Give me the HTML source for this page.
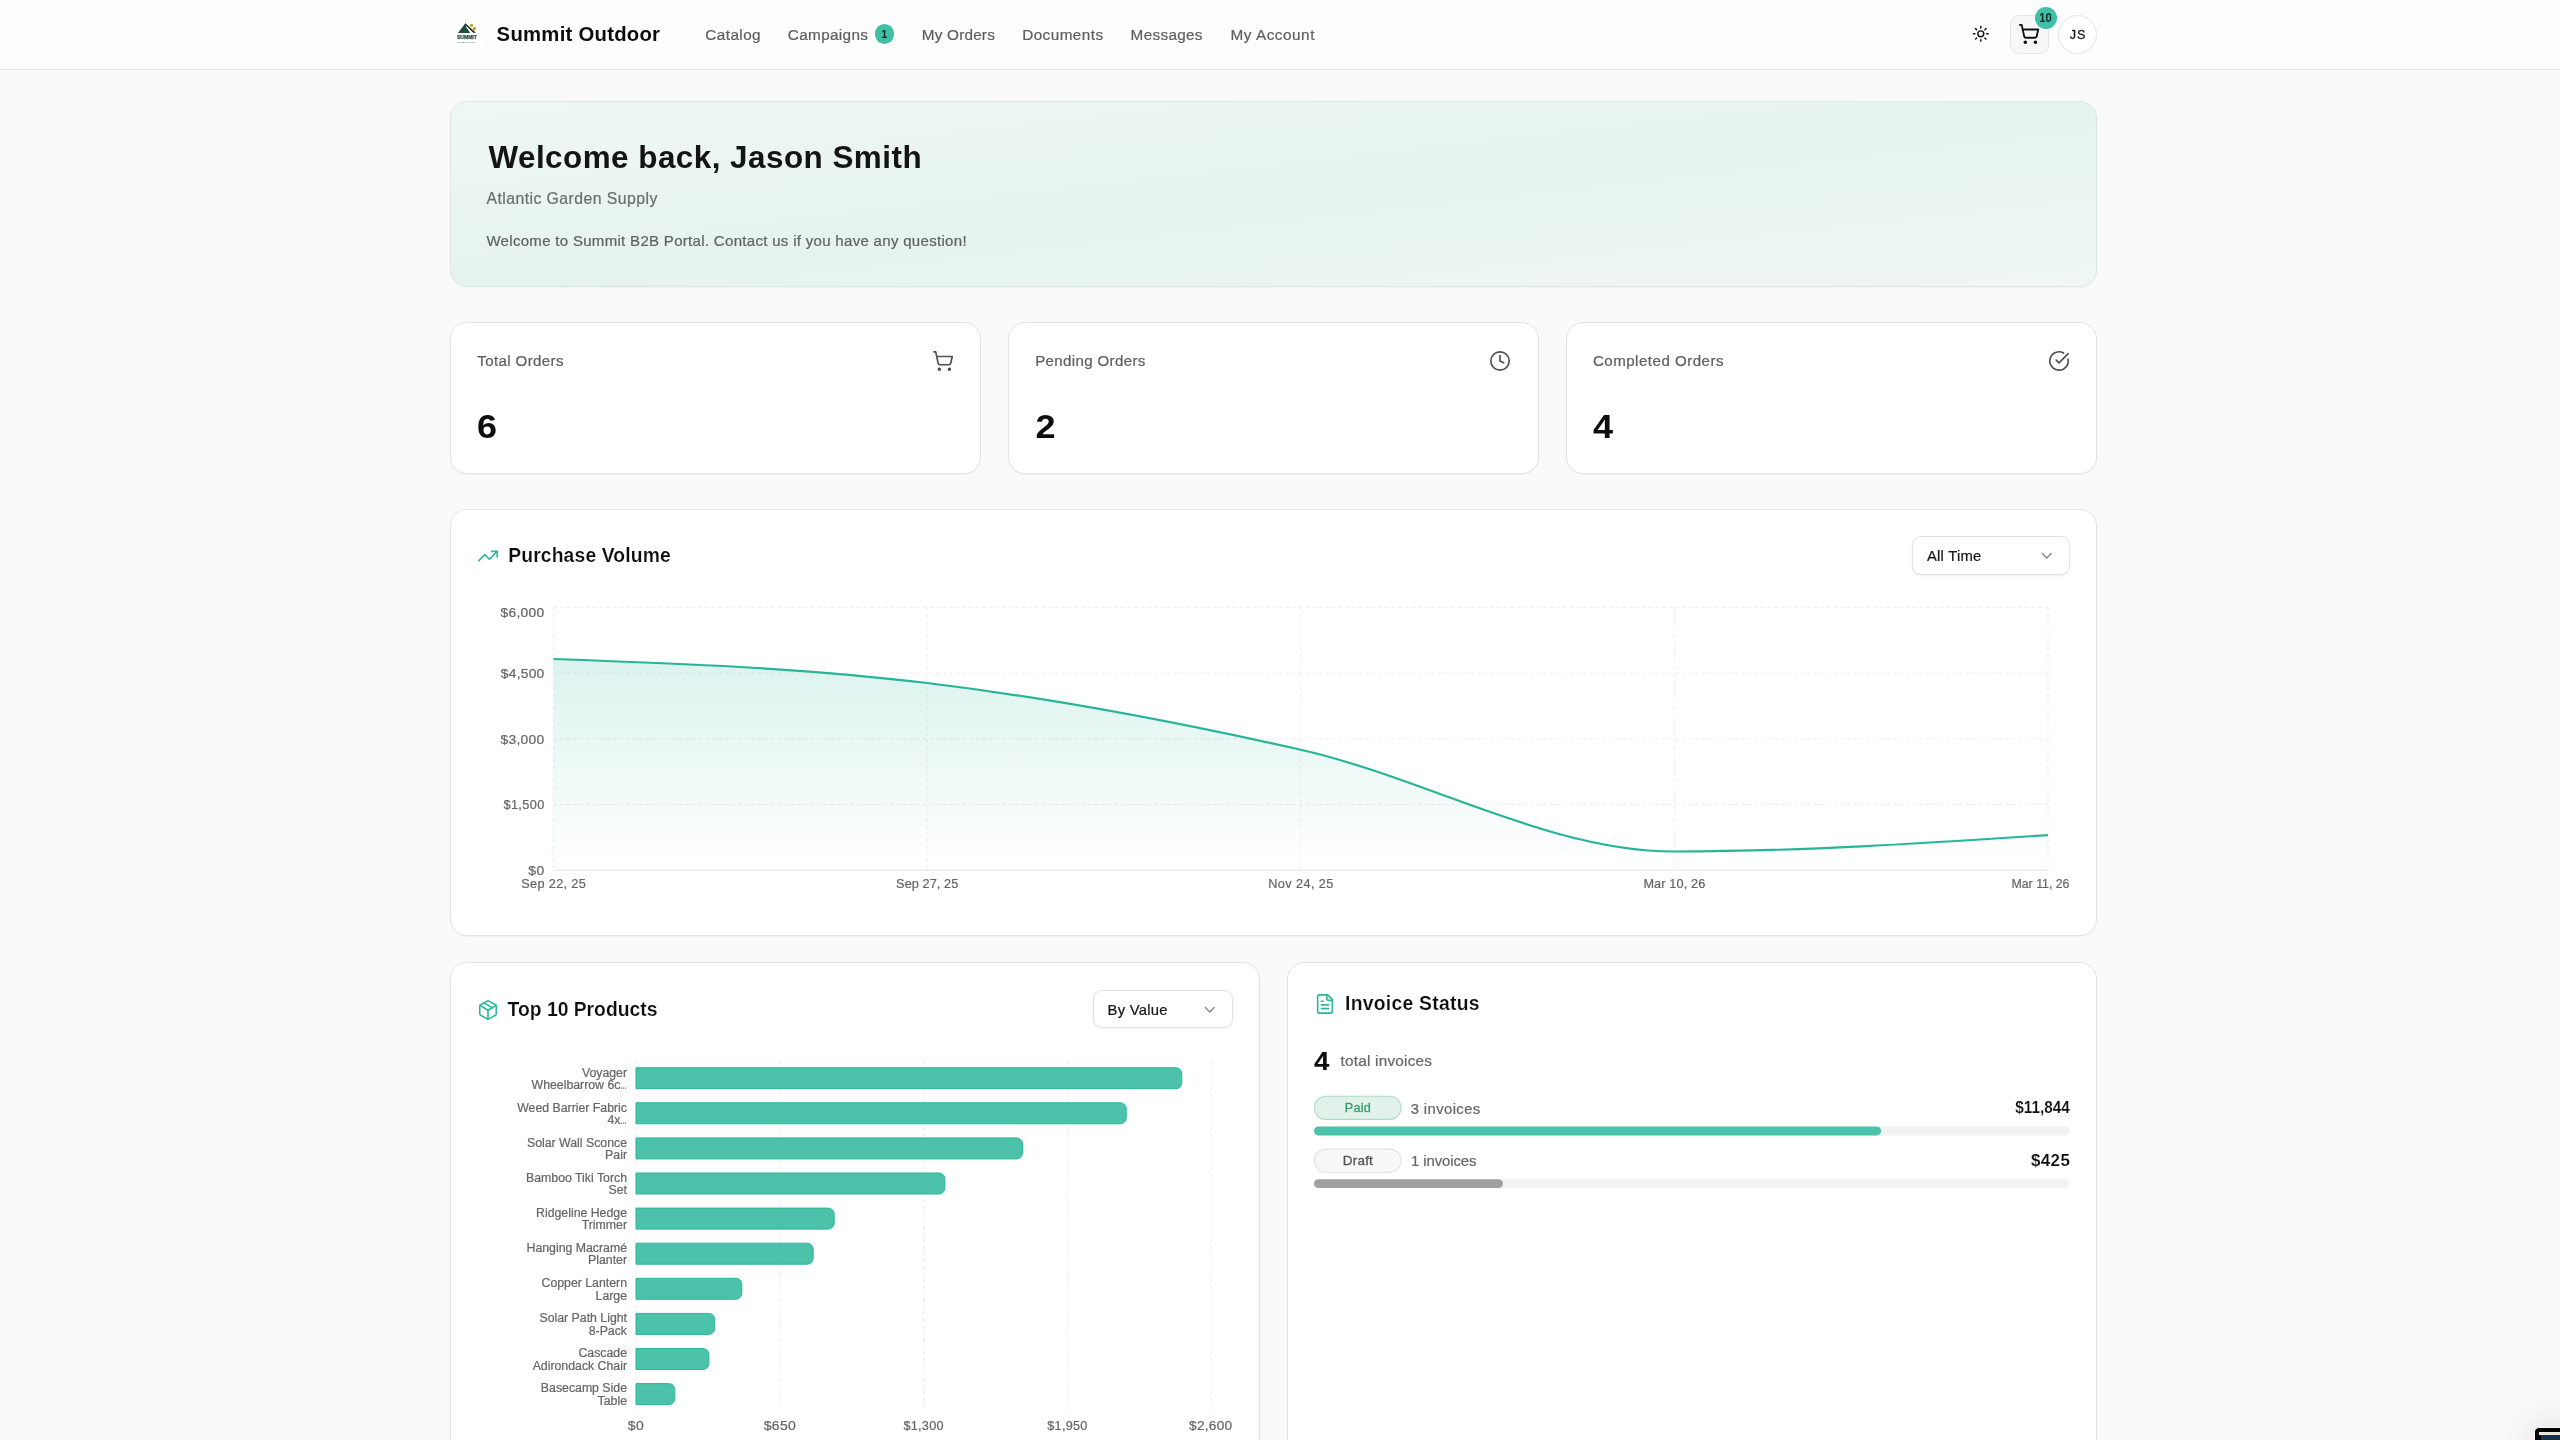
<!DOCTYPE html>
<html lang="en"><head><meta charset="utf-8"><title>Summit Outdoor – B2B Portal</title>
<style>
html,body{margin:0;padding:0;}
body{width:2560px;height:1440px;overflow:hidden;background:#fafafa;position:relative;font-family:"Liberation Sans", sans-serif;}
.txt text{font-family:"Liberation Sans", sans-serif;white-space:pre;}
.ic{position:absolute;overflow:visible;}
.abs{position:absolute;box-sizing:border-box;}
.card{position:absolute;box-sizing:border-box;background:#fff;border:1px solid #e4e4e4;border-radius:17px;box-shadow:0 1px 2px rgba(0,0,0,.04);}
.sel{position:absolute;box-sizing:border-box;background:#fff;border:1px solid #e2e2e2;border-radius:9px;box-shadow:0 1px 2px rgba(0,0,0,.07);}
svg.full{position:absolute;left:0;top:0;width:2560px;height:1440px;}
svg.txt{will-change:transform;}
</style></head><body>
<header class="abs" style="left:0;top:0;width:2560px;height:70px;background:#fdfdfd;border-bottom:1px solid #e4e4e4;"></header>
<div class="abs" style="left:450px;top:17px;width:34px;height:34px;border-radius:8px;background:#fff;"></div>
<div class="abs" style="left:874.6px;top:24.4px;width:19.6px;height:19.6px;border-radius:50%;background:#3fbfa5;"></div>
<div class="abs" style="left:2010px;top:15px;width:38.5px;height:38.5px;border-radius:9px;background:#f7f7f7;border:1px solid #e6e6e6;"></div>
<div class="abs" style="left:2034.6px;top:6.6px;width:22.2px;height:22.2px;border-radius:50%;background:#3fbfa5;"></div>
<div class="abs" style="left:2058.4px;top:14.7px;width:39px;height:39px;border-radius:50%;background:#fff;border:1px solid #e3e3e3;"></div>

<section class="abs" style="left:450px;top:101px;width:1647px;height:186px;border-radius:17px;border:1px solid #dfe7e5;background:linear-gradient(to bottom right,rgba(43,183,154,.05),rgba(43,183,154,.10),rgba(43,183,154,.05)) #fafafa;box-shadow:0 1px 2px rgba(0,0,0,.04);"></section>

<div class="card" style="left:450px;top:322px;width:531.2px;height:152px;"></div>
<div class="card" style="left:1007.9px;top:322px;width:531.2px;height:152px;"></div>
<div class="card" style="left:1565.8px;top:322px;width:531.2px;height:152px;"></div>

<div class="card" style="left:450px;top:509px;width:1647px;height:426.5px;"></div>
<div class="sel" style="left:1912.4px;top:536.3px;width:157.2px;height:38.8px;"></div>

<div class="card" style="left:450px;top:962px;width:810px;height:520px;"></div>
<div class="sel" style="left:1093.3px;top:990.2px;width:139.6px;height:38.3px;"></div>
<div class="card" style="left:1287.2px;top:962px;width:809.8px;height:520px;"></div>

<svg class="full" viewBox="0 0 2560 1440">
<defs><linearGradient id="ag" x1="0" y1="0" x2="0" y2="1"><stop offset="0.03" stop-color="#2bb79a" stop-opacity="0.165"/><stop offset="0.97" stop-color="#2bb79a" stop-opacity="0"/></linearGradient></defs>
<g stroke="#e3e3e3" stroke-width="1" stroke-dasharray="3.3 3.3" fill="none" opacity="0.7"><line x1="553.5" y1="607.50" x2="2048.0" y2="607.50"/><line x1="553.5" y1="673.17" x2="2048.0" y2="673.17"/><line x1="553.5" y1="738.85" x2="2048.0" y2="738.85"/><line x1="553.5" y1="804.53" x2="2048.0" y2="804.53"/><line x1="553.50" y1="607.5" x2="553.50" y2="870.2"/><line x1="927.12" y1="607.5" x2="927.12" y2="870.2"/><line x1="1300.75" y1="607.5" x2="1300.75" y2="870.2"/><line x1="1674.38" y1="607.5" x2="1674.38" y2="870.2"/><line x1="2048.00" y1="607.5" x2="2048.00" y2="870.2"/></g>
<path d="M553.50,659.00C678.04,663.43,802.58,667.87,927.12,683.00C1051.67,698.13,1176.21,721.72,1300.75,749.80C1425.29,777.88,1549.83,851.50,1674.38,851.50C1798.92,851.50,1923.46,843.30,2048.00,835.10L2048.00,870.20L553.50,870.20Z" fill="url(#ag)"/>
<path d="M553.50,659.00C678.04,663.43,802.58,667.87,927.12,683.00C1051.67,698.13,1176.21,721.72,1300.75,749.80C1425.29,777.88,1549.83,851.50,1674.38,851.50C1798.92,851.50,1923.46,843.30,2048.00,835.10" fill="none" stroke="#27b597" stroke-width="2.2"/>
<line x1="553.5" y1="870.2" x2="2048.0" y2="870.2" stroke="#e2e2e2" stroke-width="1"/>
<g stroke="#e3e3e3" stroke-width="1" stroke-dasharray="3.3 3.3" fill="none" opacity="0.7"><line x1="635.8" y1="1061" x2="635.8" y2="1412"/><line x1="779.7" y1="1061" x2="779.7" y2="1412"/><line x1="923.5" y1="1061" x2="923.5" y2="1412"/><line x1="1067.4" y1="1061" x2="1067.4" y2="1412"/><line x1="1211.2" y1="1061" x2="1211.2" y2="1412"/></g>
<g fill="#2bb79a" fill-opacity="0.85" stroke="#2bb79a" stroke-width="1"><path d="M636.0,1067.70H1175.80a6.0,6.0 0 0 1 6.0,6.0V1082.70a6.0,6.0 0 0 1 -6.0,6.0H636.0Z"/><path d="M636.0,1102.80H1120.30a6.0,6.0 0 0 1 6.0,6.0V1117.80a6.0,6.0 0 0 1 -6.0,6.0H636.0Z"/><path d="M636.0,1137.90H1016.50a6.0,6.0 0 0 1 6.0,6.0V1152.90a6.0,6.0 0 0 1 -6.0,6.0H636.0Z"/><path d="M636.0,1173.00H938.90a6.0,6.0 0 0 1 6.0,6.0V1188.00a6.0,6.0 0 0 1 -6.0,6.0H636.0Z"/><path d="M636.0,1208.10H828.20a6.0,6.0 0 0 1 6.0,6.0V1223.10a6.0,6.0 0 0 1 -6.0,6.0H636.0Z"/><path d="M636.0,1243.20H807.20a6.0,6.0 0 0 1 6.0,6.0V1258.20a6.0,6.0 0 0 1 -6.0,6.0H636.0Z"/><path d="M636.0,1278.30H735.80a6.0,6.0 0 0 1 6.0,6.0V1293.30a6.0,6.0 0 0 1 -6.0,6.0H636.0Z"/><path d="M636.0,1313.40H708.70a6.0,6.0 0 0 1 6.0,6.0V1328.40a6.0,6.0 0 0 1 -6.0,6.0H636.0Z"/><path d="M636.0,1348.50H702.90a6.0,6.0 0 0 1 6.0,6.0V1363.50a6.0,6.0 0 0 1 -6.0,6.0H636.0Z"/><path d="M636.0,1383.60H668.80a6.0,6.0 0 0 1 6.0,6.0V1398.60a6.0,6.0 0 0 1 -6.0,6.0H636.0Z"/></g>
<g>
<rect x="1314.4" y="1096.2" width="86.7" height="23.2" rx="11.6" fill="#e0f2e9" stroke="#a9dcc3" stroke-width="1.1"/>
<rect x="1314.4" y="1149.1" width="86.7" height="23.2" rx="11.6" fill="#f8f8f8" stroke="#e2e2e2" stroke-width="1.1"/>
<rect x="1314" y="1126.5" width="755.8" height="8.9" rx="4.45" fill="#f2f2f2"/>
<rect x="1314" y="1126.5" width="567.1" height="8.9" rx="4.45" fill="#4bc2aa"/>
<rect x="1314" y="1179.2" width="755.8" height="8.9" rx="4.45" fill="#f2f2f2"/>
<rect x="1314" y="1179.2" width="189" height="8.9" rx="4.45" fill="#a0a0a0"/>
</g>
<!-- logo -->
<g>
<path d="M465.4 23.2 L457.9 32.9 H470.3 L466.4 27.6 Z" fill="#1f4d3a"/>
<path d="M465.4 23.2 L475.9 32.7 H473.2 L464.9 24.4 Z" fill="#12281f"/>
<circle cx="471.6" cy="25.4" r="1.7" fill="#c9a227"/>
<ellipse cx="474.1" cy="29" rx="2.4" ry="1.3" fill="#c8842e" transform="rotate(-50 474.1 29)"/>
</g>
</svg>
<svg class="ic" style="left:1972.3px;top:25.3px;" width="17.6" height="17.6" viewBox="0 0 24 24" fill="none" stroke="#111" stroke-width="2" stroke-linecap="round" stroke-linejoin="round"><circle cx="12" cy="12" r="4"/><path d="M12 2v2"/><path d="M12 20v2"/><path d="m4.93 4.93 1.41 1.41"/><path d="m17.66 17.66 1.41 1.41"/><path d="M2 12h2"/><path d="M20 12h2"/><path d="m6.34 17.66-1.41 1.41"/><path d="m19.07 4.93-1.41 1.41"/></svg><svg class="ic" style="left:2018.2px;top:22.9px;" width="22" height="22" viewBox="0 0 24 24" fill="none" stroke="#111" stroke-width="2" stroke-linecap="round" stroke-linejoin="round"><circle cx="8" cy="21" r="1"/><circle cx="19" cy="21" r="1"/><path d="M2.05 2.05h2l2.66 12.42a2 2 0 0 0 2 1.58h9.78a2 2 0 0 0 1.95-1.57l1.65-7.43H5.12"/></svg><svg class="ic" style="left:932.0px;top:349.6px;" width="22" height="22" viewBox="0 0 24 24" fill="none" stroke="#4e4e4e" stroke-width="1.8" stroke-linecap="round" stroke-linejoin="round"><circle cx="8" cy="21" r="1"/><circle cx="19" cy="21" r="1"/><path d="M2.05 2.05h2l2.66 12.42a2 2 0 0 0 2 1.58h9.78a2 2 0 0 0 1.95-1.57l1.65-7.43H5.12"/></svg><svg class="ic" style="left:1489.35px;top:349.55px;" width="22" height="22" viewBox="0 0 24 24" fill="none" stroke="#4e4e4e" stroke-width="1.8" stroke-linecap="round" stroke-linejoin="round"><circle cx="12" cy="12" r="10"/><polyline points="12 6 12 12 16 14"/></svg><svg class="ic" style="left:2047.7px;top:350.05px;" width="22" height="22" viewBox="0 0 24 24" fill="none" stroke="#4e4e4e" stroke-width="1.8" stroke-linecap="round" stroke-linejoin="round"><path d="M21.801 10A10 10 0 1 1 17 3.335"/><path d="m9 11 3 3L22 4"/></svg><svg class="ic" style="left:476.8px;top:544.5px;" width="22" height="22" viewBox="0 0 24 24" fill="none" stroke="#2bb79a" stroke-width="1.75" stroke-linecap="round" stroke-linejoin="round"><polyline points="22 7 13.5 15.5 8.5 10.5 2 17"/><polyline points="16 7 22 7 22 13"/></svg><svg class="ic" style="left:476.75px;top:998.75px;" width="22" height="22" viewBox="0 0 24 24" fill="none" stroke="#2bb79a" stroke-width="1.75" stroke-linecap="round" stroke-linejoin="round"><path d="M11 21.73a2 2 0 0 0 2 0l7-4A2 2 0 0 0 21 16V8a2 2 0 0 0-1-1.73l-7-4a2 2 0 0 0-2 0l-7 4A2 2 0 0 0 3 8v8a2 2 0 0 0 1 1.73z"/><path d="M12 22V12"/><path d="m3.3 7 7.703 4.734a2 2 0 0 0 1.994 0L20.7 7"/><path d="m7.5 4.27 9 5.15"/></svg><svg class="ic" style="left:1313.75px;top:992.5px;" width="22" height="22" viewBox="0 0 24 24" fill="none" stroke="#2bb79a" stroke-width="1.75" stroke-linecap="round" stroke-linejoin="round"><path d="M15 2H6a2 2 0 0 0-2 2v16a2 2 0 0 0 2 2h12a2 2 0 0 0 2-2V7Z"/><path d="M14 2v4a2 2 0 0 0 2 2h4"/><path d="M10 9H8"/><path d="M16 13H8"/><path d="M16 17H8"/></svg><svg class="ic" style="left:2038.2px;top:547.1px;" width="17.6" height="17.6" viewBox="0 0 24 24" fill="none" stroke="#8a8a8a" stroke-width="2" stroke-linecap="round" stroke-linejoin="round"><path d="m6 9 6 6 6-6"/></svg><svg class="ic" style="left:1200.8px;top:1000.7px;" width="17.6" height="17.6" viewBox="0 0 24 24" fill="none" stroke="#8a8a8a" stroke-width="2" stroke-linecap="round" stroke-linejoin="round"><path d="m6 9 6 6 6-6"/></svg>
<svg class="full txt" viewBox="0 0 2560 1440"><text x="496.60" y="41" style="font-size:20.3px;fill:#0d0d0d;font-weight:700;letter-spacing:0.263px;">Summit Outdoor</text><text x="705.30" y="40" style="font-size:15.3px;fill:#5e5e5e;stroke:#5e5e5e;stroke-width:0.22px;letter-spacing:0.428px;">Catalog</text><text x="787.80" y="40" style="font-size:15.3px;fill:#5e5e5e;stroke:#5e5e5e;stroke-width:0.22px;letter-spacing:0.353px;">Campaigns</text><text x="921.80" y="40" style="font-size:15.3px;fill:#5e5e5e;stroke:#5e5e5e;stroke-width:0.22px;letter-spacing:0.201px;">My Orders</text><text x="1022.20" y="40" style="font-size:15.3px;fill:#5e5e5e;stroke:#5e5e5e;stroke-width:0.22px;letter-spacing:0.441px;">Documents</text><text x="1130.60" y="40" style="font-size:15.3px;fill:#5e5e5e;stroke:#5e5e5e;stroke-width:0.22px;letter-spacing:0.312px;">Messages</text><text x="1230.60" y="40" style="font-size:15.3px;fill:#5e5e5e;stroke:#5e5e5e;stroke-width:0.22px;letter-spacing:0.525px;">My Account</text><text x="881.34" y="38" style="font-size:11px;fill:#0c2a23;font-weight:700;">1</text><text transform="translate(2039.20 22) scale(0.937 1)" style="font-size:11.9px;fill:#0c2a23;font-weight:700;">10</text><text x="2069.85" y="39" style="font-size:12.6px;fill:#1a1a1a;letter-spacing:0.797px;stroke:#1a1a1a;stroke-width:0.3px;">JS</text><text x="488.40" y="168" style="font-size:31.4px;fill:#141414;font-weight:700;letter-spacing:0.483px;">Welcome back, Jason Smith</text><text x="486.40" y="204" style="font-size:15.8px;fill:#6a6f6e;stroke:#6a6f6e;stroke-width:0.22px;letter-spacing:0.449px;">Atlantic Garden Supply</text><text x="486.40" y="246" style="font-size:15.0px;fill:#5f6463;stroke:#5f6463;stroke-width:0.22px;letter-spacing:0.311px;">Welcome to Summit B2B Portal. Contact us if you have any question!</text><text x="477.30" y="366" style="font-size:15.1px;fill:#5e5e5e;stroke:#5e5e5e;stroke-width:0.22px;letter-spacing:0.362px;">Total Orders</text><text x="1035.20" y="366" style="font-size:15.1px;fill:#5e5e5e;stroke:#5e5e5e;stroke-width:0.22px;letter-spacing:0.345px;">Pending Orders</text><text x="1592.90" y="366" style="font-size:15.1px;fill:#5e5e5e;stroke:#5e5e5e;stroke-width:0.22px;letter-spacing:0.491px;">Completed Orders</text><text transform="translate(477.00 438) scale(1.08 1)" style="font-size:33.4px;fill:#0d0d0d;font-weight:700;">6</text><text transform="translate(1035.60 438) scale(1.08 1)" style="font-size:33.4px;fill:#0d0d0d;font-weight:700;">2</text><text transform="translate(1592.90 438) scale(1.08 1)" style="font-size:33.4px;fill:#0d0d0d;font-weight:700;">4</text><text x="508.20" y="562" style="font-size:19.3px;fill:#0d0d0d;font-weight:700;letter-spacing:0.158px;stroke:#fff;stroke-width:0.16px;">Purchase Volume</text><text x="1927.00" y="561" style="font-size:14.8px;fill:#161616;stroke:#161616;stroke-width:0.22px;letter-spacing:0.225px;">All Time</text><text transform="translate(500.50 617) scale(1.0931 1)" style="font-size:12.7px;fill:#666666;stroke:#666666;stroke-width:0.22px;letter-spacing:0.233px;">$6,000</text><text transform="translate(500.80 678) scale(1.0856 1)" style="font-size:12.7px;fill:#666666;stroke:#666666;stroke-width:0.22px;letter-spacing:0.233px;">$4,500</text><text transform="translate(500.60 744) scale(1.0906 1)" style="font-size:12.7px;fill:#666666;stroke:#666666;stroke-width:0.22px;letter-spacing:0.233px;">$3,000</text><text x="503.50" y="809" style="font-size:12.7px;fill:#666666;stroke:#666666;stroke-width:0.22px;letter-spacing:0.378px;">$1,500</text><text transform="translate(528.20 875) scale(1.0998 1)" style="font-size:12.7px;fill:#666666;stroke:#666666;stroke-width:0.22px;letter-spacing:0.423px;">$0</text><text x="521.20" y="888" style="font-size:12.7px;fill:#666666;stroke:#666666;stroke-width:0.22px;letter-spacing:0.358px;">Sep 22, 25</text><text x="896.10" y="888" style="font-size:12.7px;fill:#666666;stroke:#666666;stroke-width:0.22px;letter-spacing:0.092px;">Sep 27, 25</text><text x="1268.30" y="888" style="font-size:12.7px;fill:#666666;stroke:#666666;stroke-width:0.22px;letter-spacing:0.403px;">Nov 24, 25</text><text x="1643.40" y="888" style="font-size:12.7px;fill:#666666;stroke:#666666;stroke-width:0.22px;letter-spacing:0.149px;">Mar 10, 26</text><text transform="translate(2011.50 888) scale(0.9712 1)" style="font-size:12.7px;fill:#666666;stroke:#666666;stroke-width:0.22px;">Mar 11, 26</text><text x="507.60" y="1016" style="font-size:19.3px;fill:#0d0d0d;font-weight:700;letter-spacing:0.011px;stroke:#fff;stroke-width:0.16px;">Top 10 Products</text><text x="1107.60" y="1015" style="font-size:14.8px;fill:#161616;stroke:#161616;stroke-width:0.22px;letter-spacing:0.266px;">By Value</text><text x="581.88" y="1077" style="font-size:12.3px;fill:#666666;stroke:#666666;stroke-width:0.22px;">Voyager</text><text x="531.54" y="1089" style="font-size:12.3px;fill:#666666;stroke:#666666;stroke-width:0.22px;">Wheelbarrow 6c</text><text transform="translate(620.36 1089) scale(0.54 1)" style="font-size:12.3px;fill:#666666;stroke:#666666;stroke-width:0.22px;">…</text><text x="517.20" y="1112" style="font-size:12.3px;fill:#666666;stroke:#666666;stroke-width:0.22px;">Weed Barrier Fabric</text><text x="607.40" y="1124" style="font-size:12.3px;fill:#666666;stroke:#666666;stroke-width:0.22px;">4x</text><text transform="translate(620.36 1124) scale(0.54 1)" style="font-size:12.3px;fill:#666666;stroke:#666666;stroke-width:0.22px;">…</text><text x="526.98" y="1147" style="font-size:12.3px;fill:#666666;stroke:#666666;stroke-width:0.22px;">Solar Wall Sconce</text><text x="605.12" y="1159" style="font-size:12.3px;fill:#666666;stroke:#666666;stroke-width:0.22px;">Pair</text><text x="526.06" y="1182" style="font-size:12.3px;fill:#666666;stroke:#666666;stroke-width:0.22px;">Bamboo Tiki Torch</text><text x="608.53" y="1194" style="font-size:12.3px;fill:#666666;stroke:#666666;stroke-width:0.22px;">Set</text><text x="536.06" y="1217" style="font-size:12.3px;fill:#666666;stroke:#666666;stroke-width:0.22px;">Ridgeline Hedge</text><text x="581.69" y="1229" style="font-size:12.3px;fill:#666666;stroke:#666666;stroke-width:0.22px;">Trimmer</text><text x="526.52" y="1252" style="font-size:12.3px;fill:#666666;stroke:#666666;stroke-width:0.22px;">Hanging Macramé</text><text x="588.03" y="1264" style="font-size:12.3px;fill:#666666;stroke:#666666;stroke-width:0.22px;">Planter</text><text x="541.53" y="1287" style="font-size:12.3px;fill:#666666;stroke:#666666;stroke-width:0.22px;">Copper Lantern</text><text x="595.55" y="1300" style="font-size:12.3px;fill:#666666;stroke:#666666;stroke-width:0.22px;">Large</text><text x="539.48" y="1322" style="font-size:12.3px;fill:#666666;stroke:#666666;stroke-width:0.22px;">Solar Path Light</text><text x="588.72" y="1335" style="font-size:12.3px;fill:#666666;stroke:#666666;stroke-width:0.22px;">8-Pack</text><text x="578.45" y="1357" style="font-size:12.3px;fill:#666666;stroke:#666666;stroke-width:0.22px;">Cascade</text><text x="532.67" y="1370" style="font-size:12.3px;fill:#666666;stroke:#666666;stroke-width:0.22px;">Adirondack Chair</text><text x="540.86" y="1392" style="font-size:12.3px;fill:#666666;stroke:#666666;stroke-width:0.22px;">Basecamp Side</text><text x="597.59" y="1405" style="font-size:12.3px;fill:#666666;stroke:#666666;stroke-width:0.22px;">Table</text><text transform="translate(627.80 1430) scale(1.0998 1)" style="font-size:12.7px;fill:#666666;stroke:#666666;stroke-width:0.22px;letter-spacing:0.423px;">$0</text><text transform="translate(763.70 1430) scale(1.1072 1)" style="font-size:12.7px;fill:#666666;stroke:#666666;stroke-width:0.22px;letter-spacing:0.283px;">$650</text><text x="903.40" y="1430" style="font-size:12.7px;fill:#666666;stroke:#666666;stroke-width:0.22px;letter-spacing:0.278px;">$1,300</text><text x="1047.35" y="1430" style="font-size:12.7px;fill:#666666;stroke:#666666;stroke-width:0.22px;letter-spacing:0.217px;">$1,950</text><text transform="translate(1189.10 1430) scale(1.0756 1)" style="font-size:12.7px;fill:#666666;stroke:#666666;stroke-width:0.22px;letter-spacing:0.233px;">$2,600</text><text x="1345.00" y="1010" style="font-size:19.3px;fill:#0d0d0d;font-weight:700;letter-spacing:0.290px;stroke:#fff;stroke-width:0.16px;">Invoice Status</text><text transform="translate(1314.00 1070) scale(1.08 1)" style="font-size:25.6px;fill:#0d0d0d;font-weight:700;">4</text><text transform="translate(1340.50 1066) scale(1.0396 1)" style="font-size:14.8px;fill:#666666;stroke:#666666;stroke-width:0.22px;letter-spacing:0.197px;">total invoices</text><text x="1344.70" y="1112" style="font-size:12.6px;fill:#2f9e68;letter-spacing:0.327px;stroke:#2f9e68;stroke-width:0.3px;">Paid</text><text transform="translate(1342.70 1165) scale(1.0741 1)" style="font-size:12.6px;fill:#555555;letter-spacing:0.205px;stroke:#555555;stroke-width:0.3px;">Draft</text><text x="1410.70" y="1114" style="font-size:14.8px;fill:#666666;stroke:#666666;stroke-width:0.22px;letter-spacing:0.410px;">3 invoices</text><text x="1410.90" y="1166" style="font-size:14.8px;fill:#666666;stroke:#666666;stroke-width:0.22px;letter-spacing:-0.024px;">1 invoices</text><text transform="translate(2015.20 1113) scale(0.9777 1)" style="font-size:15.7px;fill:#0d0d0d;font-weight:700;stroke:#fff;stroke-width:0.14px;">$11,844</text><text transform="translate(2031.00 1166) scale(1.0792 1)" style="font-size:15.7px;fill:#0d0d0d;font-weight:700;letter-spacing:0.349px;stroke:#fff;stroke-width:0.14px;">$425</text><text x="457.0" y="39.4" style="font-weight:700;font-size:6.1px;fill:#1b4435;stroke:#1b4435;stroke-width:0.25px" textLength="19.8" lengthAdjust="spacingAndGlyphs">SUMMIT</text><text x="457.3" y="42.9" style="font-weight:700;font-size:2.3px;fill:#6d8076" textLength="18.8" lengthAdjust="spacingAndGlyphs">OUTDOOR CO.</text></svg>
<!-- corner widget -->
<div class="abs" style="left:2534px;top:1427px;width:40px;height:30px;border-radius:5px;background:#000;border:1px solid #fff;box-shadow:0 4px 40px rgba(0,0,0,.20);"></div>
<div class="abs" style="left:2538.5px;top:1432px;width:30px;height:3px;background:#ece9dc;"></div>
<div class="abs" style="left:2541px;top:1435px;width:30px;height:8px;background:#16324a;"></div>
</body></html>
